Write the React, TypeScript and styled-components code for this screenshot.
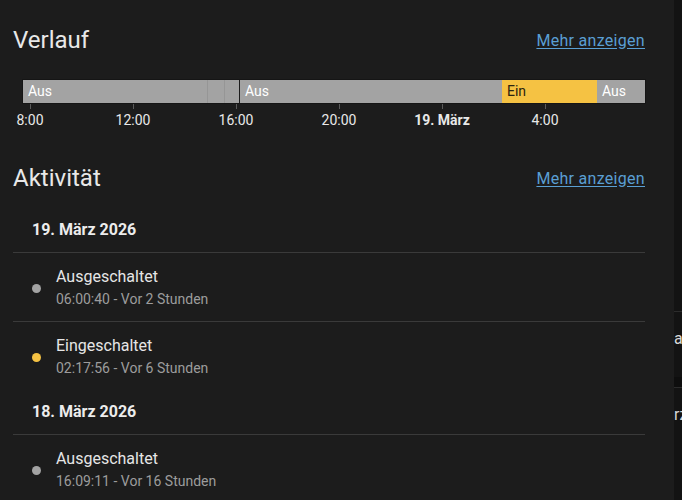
import React from "react";
import styled, { createGlobalStyle } from "styled-components";

const GlobalStyle = createGlobalStyle`
  html, body {
    margin: 0;
    padding: 0;
    background: #1c1c1c;
  }
  body {
    font-family: Roboto, "Noto Sans", "Liberation Sans", sans-serif;
    -webkit-font-smoothing: antialiased;
  }
`;

const Page = styled.div`
  display: flex;
  width: 682px;
  height: 500px;
  overflow: hidden;
`;

const Main = styled.main`
  width: 674px;
  flex: none;
  background: #1c1c1c;
  padding-top: 24px;
  box-sizing: border-box;
`;

const SectionHeader = styled.div`
  display: flex;
  justify-content: space-between;
  align-items: center;
  height: 32px;
  padding: 0 29px 0 13px;
`;

const Title = styled.h2`
  margin: 0;
  font-size: 24px;
  font-weight: 400;
  color: #e8e8e8;
  line-height: 32px;
`;

const MoreLink = styled.a`
  font-size: 16px;
  letter-spacing: 0.3px;
  color: #5a9fd3;
  text-decoration: underline;
  text-underline-offset: 2px;
  cursor: pointer;
`;

const Chart = styled.div`
  margin: 24px 29px 32px 23px;
`;

const Bar = styled.div`
  display: flex;
  height: 23px;
  box-shadow: 0 0 0 1px #151515;
`;

const Segment = styled.div<{ $on?: boolean; $divider?: "hard" | "soft" }>`
  flex: none;
  box-sizing: border-box;
  height: 100%;
  overflow: hidden;
  white-space: nowrap;
  background: ${(p) => (p.$on ? "#f5c243" : "#a3a3a3")};
  color: ${(p) => (p.$on ? "#2b2410" : "#ffffff")};
  font-size: 14px;
  line-height: 23px;
  padding-left: 5px;
  border-left: ${(p) =>
    p.$divider === "hard"
      ? "1px solid #1c1c1c"
      : p.$divider === "soft"
      ? "1px solid rgba(0,0,0,0.08)"
      : "none"};
`;

const Axis = styled.div`
  position: relative;
  height: 27px;
`;

const Tick = styled.span`
  position: absolute;
  top: 1px;
  width: 1px;
  height: 5px;
  background: #5a5a5a;
`;

const TickLabel = styled.span<{ $bold?: boolean }>`
  position: absolute;
  top: 7px;
  transform: translateX(-50%);
  font-size: 14px;
  line-height: 20px;
  white-space: nowrap;
  color: #e8e8e8;
  font-weight: ${(p) => (p.$bold ? 700 : 400)};
`;

const List = styled.div`
  margin: 14px 29px 0 13px;
`;

const DateHeader = styled.div`
  height: 44px;
  line-height: 44px;
  padding-left: 19px;
  font-size: 16px;
  font-weight: 700;
  color: #ececec;
  border-bottom: 1px solid #3a3a3a;
`;

const Entry = styled.div<{ $last?: boolean }>`
  display: flex;
  align-items: center;
  gap: 15px;
  padding: 12px 0 12px 19px;
  border-bottom: ${(p) => (p.$last ? "none" : "1px solid #3a3a3a")};
`;

const Dot = styled.span<{ $on?: boolean }>`
  flex: none;
  width: 9px;
  height: 9px;
  border-radius: 50%;
  margin-top: 2px;
  background: ${(p) => (p.$on ? "#f5c243" : "#a3a3a3")};
`;

const EntryText = styled.div`
  display: flex;
  flex-direction: column;
`;

const EntryTitle = styled.span`
  font-size: 16px;
  line-height: 24px;
  color: #e6e6e6;
`;

const EntrySub = styled.span`
  font-size: 14px;
  line-height: 20px;
  color: #9c9c9c;
`;

const Side = styled.aside`
  width: 8px;
  flex: none;
  background: #131313;
  overflow: hidden;
  padding-top: 311px;
`;

const SideRow = styled.div`
  height: 65px;
  border-top: 1px solid #2c2c2c;
  color: #d8d8d8;
  font-size: 16px;
  line-height: 54px;
  white-space: nowrap;
`;

const SideGap = styled.div`
  height: 10px;
  background: #0e0e0e;
`;

const segments = [
  { w: 184, label: "Aus" },
  { w: 17, label: "", divider: "soft" as const },
  { w: 15, label: "", divider: "soft" as const },
  { w: 263, label: "Aus", divider: "hard" as const },
  { w: 95, label: "Ein", on: true },
  { w: 48, label: "Aus" },
];

const ticks = [
  { x: 7, label: "8:00" },
  { x: 110, label: "12:00" },
  { x: 213, label: "16:00" },
  { x: 316, label: "20:00" },
  { x: 419, label: "19. März", bold: true },
  { x: 522, label: "4:00" },
];

const days = [
  {
    date: "19. März 2026",
    entries: [
      { title: "Ausgeschaltet", sub: "06:00:40 - Vor 2 Stunden" },
      { title: "Eingeschaltet", sub: "02:17:56 - Vor 6 Stunden", on: true },
    ],
  },
  {
    date: "18. März 2026",
    entries: [{ title: "Ausgeschaltet", sub: "16:09:11 - Vor 16 Stunden" }],
  },
];

export default function App() {
  return (
    <Page>
      <GlobalStyle />
      <Main>
        <SectionHeader>
          <Title>Verlauf</Title>
          <MoreLink>Mehr anzeigen</MoreLink>
        </SectionHeader>
        <Chart>
          <Bar>
            {segments.map((s, i) => (
              <Segment
                key={i}
                $on={s.on}
                $divider={s.divider}
                style={{ width: s.w }}
              >
                {s.label}
              </Segment>
            ))}
          </Bar>
          <Axis>
            {ticks.map((t) => (
              <React.Fragment key={t.label}>
                <Tick style={{ left: t.x }} />
                <TickLabel $bold={t.bold} style={{ left: t.x }}>
                  {t.label}
                </TickLabel>
              </React.Fragment>
            ))}
          </Axis>
        </Chart>

        <SectionHeader>
          <Title>Aktivität</Title>
          <MoreLink>Mehr anzeigen</MoreLink>
        </SectionHeader>
        <List>
          {days.map((d) => (
            <div key={d.date}>
              <DateHeader>{d.date}</DateHeader>
              {d.entries.map((e, i) => (
                <Entry key={i} $last={i === d.entries.length - 1}>
                  <Dot $on={e.on} />
                  <EntryText>
                    <EntryTitle>{e.title}</EntryTitle>
                    <EntrySub>{e.sub}</EntrySub>
                  </EntryText>
                </Entry>
              ))}
            </div>
          ))}
        </List>
      </Main>
      <Side>
        <SideRow>a</SideRow>
        <SideGap />
        <SideRow>rz</SideRow>
      </Side>
    </Page>
  );
}
